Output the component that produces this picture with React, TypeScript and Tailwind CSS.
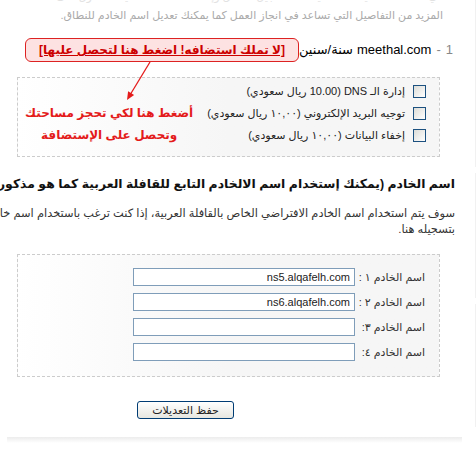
const font = "font-['Liberation_Sans','DejaVu_Sans',sans-serif]";

const options = [
  "إدارة الـ DNS (10.00 ريال سعودي)",
  "توجيه البريد الإلكتروني (١٠,٠٠ ريال سعودي)",
  "إخفاء البيانات (١٠,٠٠ ريال سعودي)",
];

const servers = [
  { label: "اسم الخادم ١ :", value: "ns5.alqafelh.com" },
  { label: "اسم الخادم ٢ :", value: "ns6.alqafelh.com" },
  { label: "اسم الخادم ٣:", value: "" },
  { label: "اسم الخادم ٤:", value: "" },
];

const Checkbox = () => (
  <span className="block h-[13px] w-[13px] shrink-0 border border-[#1c5180] bg-gradient-to-br from-[#dcdcd7] to-white" />
);

// red hint arrow pointing from the hosting link down to the hint text
const HintArrow = () => (
  <svg
    className="pointer-events-none absolute left-0 top-0"
    width="462"
    height="454"
    viewBox="0 0 462 454"
  >
    <line x1="150" y1="62" x2="130" y2="95" stroke="#e41b1b" strokeWidth="1.3" />
    <polygon points="127,100 134.1,95 128.1,91.3" fill="#e41b1b" />
  </svg>
);

const App = () => {
  return (
    <div
      dir="rtl"
      className={`flex h-[454px] w-[476px] overflow-hidden bg-white text-[#222] ${font}`}
    >
      <aside className="flex w-[14px] shrink-0 flex-col gap-[6px]">
        <div className="h-[167px] border-r border-[#f1f1f1]" />
        <div className="h-[125px] border-r border-[#f1f1f1]" />
        <div className="h-[123px] border-r border-[#f1f1f1]" />
      </aside>

      <main className="relative w-[462px] shrink-0">
        <div className="mt-[-10px] pr-[19px] text-[11px] leading-[17px] text-[#aaa] whitespace-nowrap">
          <p className="-translate-y-[2px] text-[#e2e2e2]">
            في هذه الصفحة يمكنك تحديد مدة تسجيل النطاق وإضافة خدمات اضافية للحصول على
          </p>
          <p>المزيد من التفاصيل التي تساعد في انجاز العمل كما يمكنك تعديل اسم الخادم للنطاق.</p>
        </div>

        <div className="mt-[14px] flex h-[24px] items-center pr-[9px] text-[13px] whitespace-nowrap">
          <span className="text-[#888]">1</span>
          <span className="mx-[5px] text-[#888]">-</span>
          <span className="text-black" dir="ltr">meethal.com</span>
          <span className="mr-[4px] text-black">سنة/سنين</span>
          <a
            href="#"
            className="flex h-[24px] items-center rounded-[6px] border border-[#d22] bg-[#fde2e2] px-[13px] text-[12px] font-bold text-[#c00] underline"
          >
            [لا تملك استضافه! اضغط هنا لتحصل عليها]
          </a>
        </div>

        <section className="mr-[22px] mt-[15px] flex h-[80px] w-[423px] justify-between border border-dashed border-[#ccc] bg-gradient-to-l from-[#f6f6f6] via-[#f6f6f6] to-white pr-[13px] pt-[2px]">
          <ul className="flex flex-col text-[11px] text-[#222]">
            {options.map((o) => (
              <li key={o} className="flex h-[22px] items-center gap-[8px] whitespace-nowrap">
                <Checkbox />
                <span>{o}</span>
              </li>
            ))}
          </ul>
          <div className="w-[196px] shrink-0 pt-[22px] text-center text-[12px] font-bold leading-[22px] whitespace-nowrap text-[#e41b1b]">
            <p>أضغط هنا لكي تحجز مساحتك</p>
            <p>وتحصل على الإستضافة</p>
          </div>
        </section>

        <h2 className="mt-[17px] pr-[7px] text-[12.4px] font-bold leading-[20px] text-[#111] whitespace-nowrap">
          اسم الخادم (يمكنك إستخدام اسم الالخادم التابع للقافلة العربية كما هو مذكور في الأسفل)
        </h2>

        <p className="mt-[11px] pr-[7px] text-[11.4px] leading-[16px] text-[#333] whitespace-nowrap">
          سوف يتم استخدام اسم الخادم الافتراضي الخاص بالقافلة العربية، إذا كنت ترغب باستخدام اسم خادم خاص بك يمكنك
          <br />
          بتسجيله هنا.
        </p>

        <section className="mr-[22px] mt-[17px] flex h-[123px] w-[423px] flex-col gap-[7px] border border-dashed border-[#ccc] bg-gradient-to-l from-[#f6f6f6] via-[#f6f6f6] to-white pr-[14px] pt-[13px]">
          {servers.map((s) => (
            <div key={s.label} className="flex h-[18px] items-center gap-[6px]">
              <label className="w-[64px] shrink-0 whitespace-nowrap text-[11px] text-[#333]">
                {s.label}
              </label>
              <input
                dir="ltr"
                defaultValue={s.value}
                className="h-[18px] w-[222px] border border-[#7f9db9] bg-white px-[4px] text-right text-[11px] text-[#222] outline-none"
              />
            </div>
          ))}
        </section>

        <div dir="ltr" className="mt-[20px] pl-[137px]">
          <button className="h-[18px] w-[97px] rounded-[3px] border border-[#003c74] bg-gradient-to-b from-white to-[#e6e6e0] text-[11px] text-[#222]">
            حفظ التعديلات
          </button>
        </div>

        <div className="ml-[10px] mt-[16px] h-[6px] w-[455px] bg-gradient-to-b from-[#ececec] to-white" />

        <HintArrow />
      </main>
    </div>
  );
};

export default App;
